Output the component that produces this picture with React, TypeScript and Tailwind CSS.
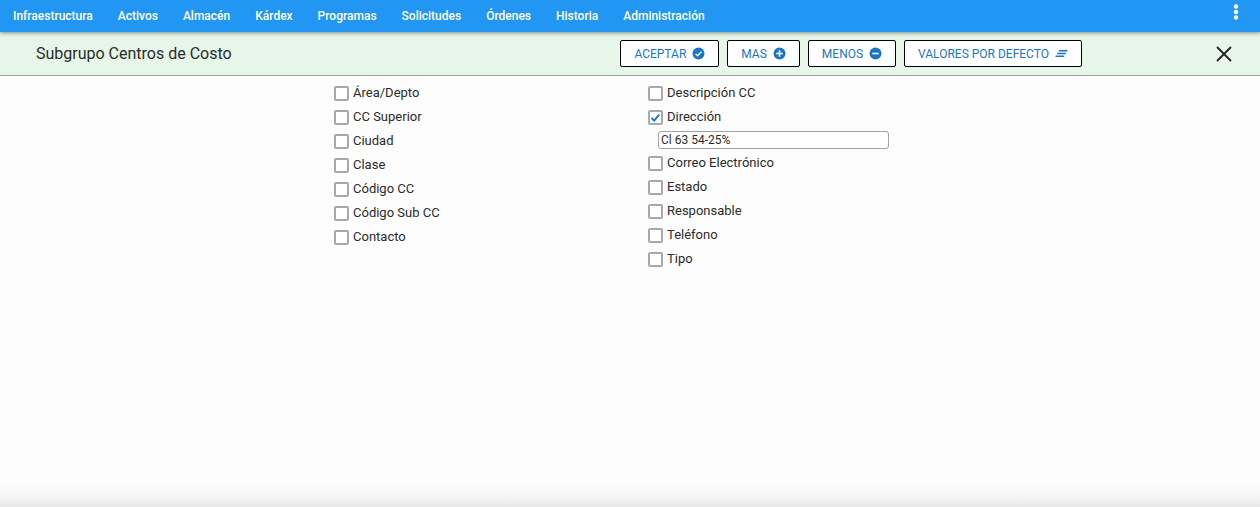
import { useState } from 'react';
import type { ReactNode } from 'react';

const MENU = [
  'Infraestructura',
  'Activos',
  'Almacén',
  'Kárdex',
  'Programas',
  'Solicitudes',
  'Órdenes',
  'Historia',
  'Administración',
];

interface Field {
  id: string;
  label: string;
}

const LEFT_FIELDS: Field[] = [
  { id: 'area', label: 'Área/Depto' },
  { id: 'superior', label: 'CC Superior' },
  { id: 'ciudad', label: 'Ciudad' },
  { id: 'clase', label: 'Clase' },
  { id: 'codigo', label: 'Código CC' },
  { id: 'codigo-sub', label: 'Código Sub CC' },
  { id: 'contacto', label: 'Contacto' },
];

const RIGHT_FIELDS: Field[] = [
  { id: 'descripcion', label: 'Descripción CC' },
  { id: 'direccion', label: 'Dirección' },
  { id: 'correo', label: 'Correo Electrónico' },
  { id: 'estado', label: 'Estado' },
  { id: 'responsable', label: 'Responsable' },
  { id: 'telefono', label: 'Teléfono' },
  { id: 'tipo', label: 'Tipo' },
];

// 24x24 glyphs used inside the toolbar buttons
const CheckCircle = () => (
  <svg viewBox="0 0 24 24" className="size-[13px]" aria-hidden="true">
    <circle cx="12" cy="12" r="11" fill="#1976c5" />
    <path d="M6.5 12.5l3.7 3.7 7.5-7.7" fill="none" stroke="#fff" strokeWidth="2.4" />
  </svg>
);

const PlusCircle = () => (
  <svg viewBox="0 0 24 24" className="size-[13px]" aria-hidden="true">
    <circle cx="12" cy="12" r="11" fill="#1976c5" />
    <path d="M12 6v12M6 12h12" stroke="#fff" strokeWidth="2.8" />
  </svg>
);

const MinusCircle = () => (
  <svg viewBox="0 0 24 24" className="size-[13px]" aria-hidden="true">
    <circle cx="12" cy="12" r="11" fill="#1976c5" />
    <path d="M6 12h12" stroke="#fff" strokeWidth="2.8" />
  </svg>
);

const ClearAll = () => (
  <svg viewBox="0 0 24 24" className="size-[13px]" aria-hidden="true">
    <path d="M7 7h16M4 12h16M1 17h16" stroke="#1976c5" strokeWidth="2.7" />
  </svg>
);

const ToolbarButton = ({ label, icon }: { label: string; icon: ReactNode }) => (
  <button
    type="button"
    className="flex h-[27px] items-center gap-1.5 whitespace-nowrap rounded-xs border border-black bg-white px-[13px] text-xs text-[#1976c5]"
  >
    {label}
    {icon}
  </button>
);

interface CheckFieldProps {
  field: Field;
  checked: boolean;
  onToggle: (id: string) => void;
}

const CheckField = ({ field, checked, onToggle }: CheckFieldProps) => (
  <label htmlFor={field.id} className="flex h-6 items-center gap-1">
    <span className="grid size-[15px] shrink-0">
      <input
        id={field.id}
        type="checkbox"
        checked={checked}
        onChange={() => onToggle(field.id)}
        className="col-start-1 row-start-1 size-[15px] appearance-none rounded-xs border-2 border-[#a9a9a9] bg-white"
      />
      {checked && (
        <svg viewBox="0 0 15 15" className="pointer-events-none col-start-1 row-start-1 size-[15px]" aria-hidden="true">
          <path d="M3.5 8l2.7 2.7 5-6" fill="none" stroke="#1479d6" strokeWidth="1.9" />
        </svg>
      )}
    </span>
    {field.label}
  </label>
);

export default function App() {
  const [selected, setSelected] = useState<string[]>(['direccion']);
  const [direccion, setDireccion] = useState('Cl 63 54-25%');

  const toggle = (id: string) => {
    setSelected(prev => (prev.includes(id) ? prev.filter(s => s !== id) : [...prev, id]));
  };

  return (
    <div className="flex min-h-screen flex-col bg-[#fdfdfd] font-[Roboto,sans-serif] text-[#2b2b2b]">
      <header className="relative z-10 flex h-8 items-center justify-between bg-[#2196f3] pl-[13px] pr-4 shadow-[0_1px_4px_rgba(0,0,0,0.45)]">
        <nav className="flex gap-[25px] text-xs font-medium text-white">
          {MENU.map(item => (
            <a key={item} href="#" className="whitespace-nowrap">{item}</a>
          ))}
        </nav>
        <button type="button" aria-label="Más opciones" className="w-4">
          <svg viewBox="0 0 16 24" className="h-6 w-4" fill="#fff" aria-hidden="true">
            <circle cx="8" cy="2.5" r="2.2" />
            <circle cx="8" cy="8" r="2.2" />
            <circle cx="8" cy="13.5" r="2.2" />
          </svg>
        </button>
      </header>

      <div className="flex h-11 items-center border-b border-[#a39f9d] bg-[#e6f6e8] pl-9 pr-7">
        <h1 className="flex-1 text-base">Subgrupo Centros de Costo</h1>
        <div className="flex gap-2">
          <ToolbarButton label="ACEPTAR" icon={<CheckCircle />} />
          <ToolbarButton label="MAS" icon={<PlusCircle />} />
          <ToolbarButton label="MENOS" icon={<MinusCircle />} />
          <ToolbarButton label="VALORES POR DEFECTO" icon={<ClearAll />} />
        </div>
        <div className="flex w-[150px] justify-end">
          <button type="button" aria-label="Cerrar">
            <svg viewBox="0 0 16 16" className="size-4" aria-hidden="true">
              <path d="M1 1l14 14M15 1L1 15" stroke="#222" strokeWidth="1.8" />
            </svg>
          </button>
        </div>
      </div>

      <main className="grid flex-1 grid-cols-4 content-start pt-[5px] text-[13px]">
        <div className="col-start-2 pl-[19px]">
          {LEFT_FIELDS.map(field => (
            <CheckField key={field.id} field={field} checked={selected.includes(field.id)} onToggle={toggle} />
          ))}
        </div>
        <div className="pl-[18px]">
          {RIGHT_FIELDS.map(field => (
            <div key={field.id}>
              <CheckField field={field} checked={selected.includes(field.id)} onToggle={toggle} />
              {field.id === 'direccion' && selected.includes('direccion') && (
                <div className="flex h-[22px] items-center pl-2.5 pr-14">
                  <input
                    type="text"
                    aria-label="Dirección"
                    value={direccion}
                    onChange={e => setDireccion(e.target.value)}
                    className="h-[18px] w-full rounded-[3px] border border-[#a3a3a3] bg-white px-0.5 text-xs"
                  />
                </div>
              )}
            </div>
          ))}
        </div>
      </main>

      <div className="h-6 bg-linear-to-b from-[#fdfdfd] via-[#f7f7f7] to-[#e8e8e8]" />
    </div>
  );
}
